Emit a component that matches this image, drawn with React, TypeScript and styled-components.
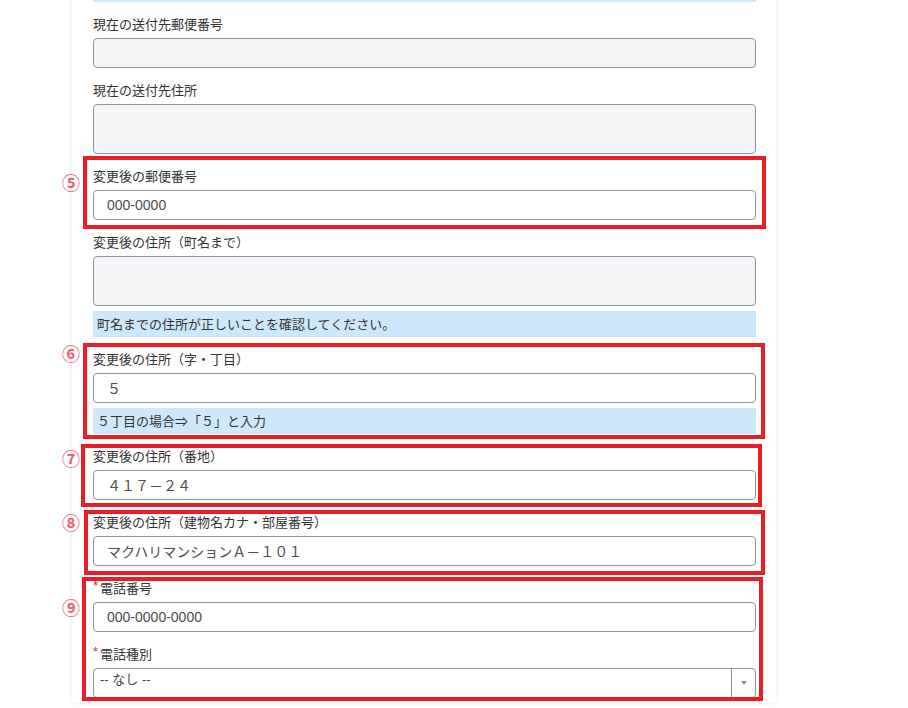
import React from 'react'
import styled, { createGlobalStyle } from 'styled-components'

const GlobalStyle = createGlobalStyle`
  html, body {
    margin: 0;
    padding: 0;
    background: #fff;
    overflow: hidden;
  }
  body {
    font-family: "Noto Sans CJK JP", "Noto Sans", sans-serif;
    color: #333;
  }
`

const Page = styled.div`
  height: 708px;
  padding-left: 72px;
  overflow: hidden;
`

// the page is scrolled: the top of the card and a note lie above the window
const Card = styled.div`
  width: 704px;
  box-sizing: border-box;
  margin-top: -29px;
  padding: 0 20px 5px 21px;
  background: #fff;
  border-radius: 4px;
  box-shadow: 0 0 5px rgba(0, 0, 0, 0.1);
`

const Group = styled.div`
  position: relative;
`

const Field = styled.div`
  margin-top: 13px;
`

const Label = styled.div`
  height: 18px;
  line-height: 18px;
  margin-bottom: 5px;
  font-size: 13px;
  color: #333;
  white-space: nowrap;
`

const Required = styled.span`
  position: relative;
  top: -3px;
  margin-right: 2px;
  font-family: "Liberation Sans", sans-serif;
  font-size: 13px;
  color: #e3202c;
`

const fieldBox = `
  display: block;
  width: 100%;
  box-sizing: border-box;
  border: 1px solid #8d93a1;
  border-radius: 4px;
  padding: 0 13px;
  font: 14px "Liberation Sans", "Noto Sans CJK JP", sans-serif;
  color: #4d4d4d;
  outline: none;
`

const TextInput = styled.input<{ $locked?: boolean }>`
  ${fieldBox}
  height: 30px;
  background: ${p => (p.$locked ? '#f3f4f6' : '#fff')};

  &::placeholder {
    color: #4d4d4d;
  }
`

const TextArea = styled.textarea`
  ${fieldBox}
  height: 50px;
  resize: none;
  background: #f3f4f6;
`

const Note = styled.div`
  margin-top: 5px;
  height: 26px;
  line-height: 26px;
  padding: 0 4px;
  background: #cde8fb;
  font-size: 13px;
  color: #333;
  white-space: nowrap;
`

const SelectBox = styled.div`
  display: flex;
  height: 30px;
  box-sizing: border-box;
  border: 1px solid #8d93a1;
  border-radius: 4px;
  background: #fff;
`

const SelectValue = styled.span`
  flex: 1;
  padding-left: 6px;
  line-height: 28px;
  font: 13px "Liberation Sans", "Noto Sans CJK JP", sans-serif;
  color: #444;
`

const SelectArrow = styled.span`
  width: 24px;
  box-sizing: border-box;
  border-left: 1px solid #8d93a1;
  display: flex;
  align-items: center;
  justify-content: center;

  &::after {
    content: '';
    border-left: 3px solid transparent;
    border-right: 3px solid transparent;
    border-top: 4px solid #8a8a8a;
  }
`

// red annotation frame laid over a group of fields
const Frame = styled.div<{ $t: number; $r: number; $b: number; $l: number }>`
  position: absolute;
  top: ${p => p.$t}px;
  right: ${p => p.$r}px;
  bottom: ${p => p.$b}px;
  left: ${p => p.$l}px;
  border: 4px solid #ec1c24;
  pointer-events: none;
`

const Marker = styled.span<{ $top: number }>`
  position: absolute;
  left: -32px;
  top: ${p => p.$top}px;
  width: 20px;
  text-align: center;
  font-size: 18px;
  font-weight: 700;
  line-height: 18px;
  color: #ef5d6a;
`

interface FrameBox {
  t: number
  r: number
  b: number
  l: number
}

const Annotated = ({ mark, markTop, box, children }: {
  mark: string
  markTop: number
  box: FrameBox
  children: React.ReactNode
}) => (
  <Group>
    <Marker $top={markTop}>{mark}</Marker>
    {children}
    <Frame $t={box.t} $r={box.r} $b={box.b} $l={box.l} />
  </Group>
)

export default function App() {
  return (
    <Page>
      <GlobalStyle />
      <Card>
        <Note />

        <Field>
          <Label>現在の送付先郵便番号</Label>
          <TextInput $locked readOnly />
        </Field>

        <Field>
          <Label>現在の送付先住所</Label>
          <TextArea readOnly />
        </Field>

        <Annotated mark="⑤" markTop={6} box={{ t: -11, r: -10, b: -9, l: -10 }}>
          <Field>
            <Label>変更後の郵便番号</Label>
            <TextInput placeholder="000-0000" readOnly />
          </Field>
        </Annotated>

        <Field>
          <Label>変更後の住所（町名まで）</Label>
          <TextArea readOnly />
          <Note>町名までの住所が正しいことを確認してください。</Note>
        </Field>

        <Annotated mark="⑥" markTop={-6} box={{ t: -7, r: -9, b: -5, l: -10 }}>
          <Field>
            <Label>変更後の住所（字・丁目）</Label>
            <TextInput defaultValue="５" readOnly />
            <Note>５丁目の場合⇒「５」と入力</Note>
          </Field>
        </Annotated>

        <Annotated mark="⑦" markTop={2} box={{ t: -3, r: -6, b: -7, l: -12 }}>
          <Field>
            <Label>変更後の住所（番地）</Label>
            <TextInput defaultValue="４１７－２４" readOnly />
          </Field>
        </Annotated>

        <Annotated mark="⑧" markTop={0} box={{ t: -3, r: -9, b: -9, l: -9 }}>
          <Field>
            <Label>変更後の住所（建物名カナ・部屋番号）</Label>
            <TextInput defaultValue="マクハリマンションＡ－１０１" readOnly />
          </Field>
        </Annotated>

        <Annotated mark="⑨" markTop={19} box={{ t: -2, r: -7, b: -3, l: -11 }}>
          <Field>
            <Label><Required>*</Required>電話番号</Label>
            <TextInput placeholder="000-0000-0000" readOnly />
          </Field>
          <Field>
            <Label><Required>*</Required>電話種別</Label>
            <SelectBox>
              <SelectValue>-- なし --</SelectValue>
              <SelectArrow />
            </SelectBox>
          </Field>
        </Annotated>
      </Card>
    </Page>
  )
}
